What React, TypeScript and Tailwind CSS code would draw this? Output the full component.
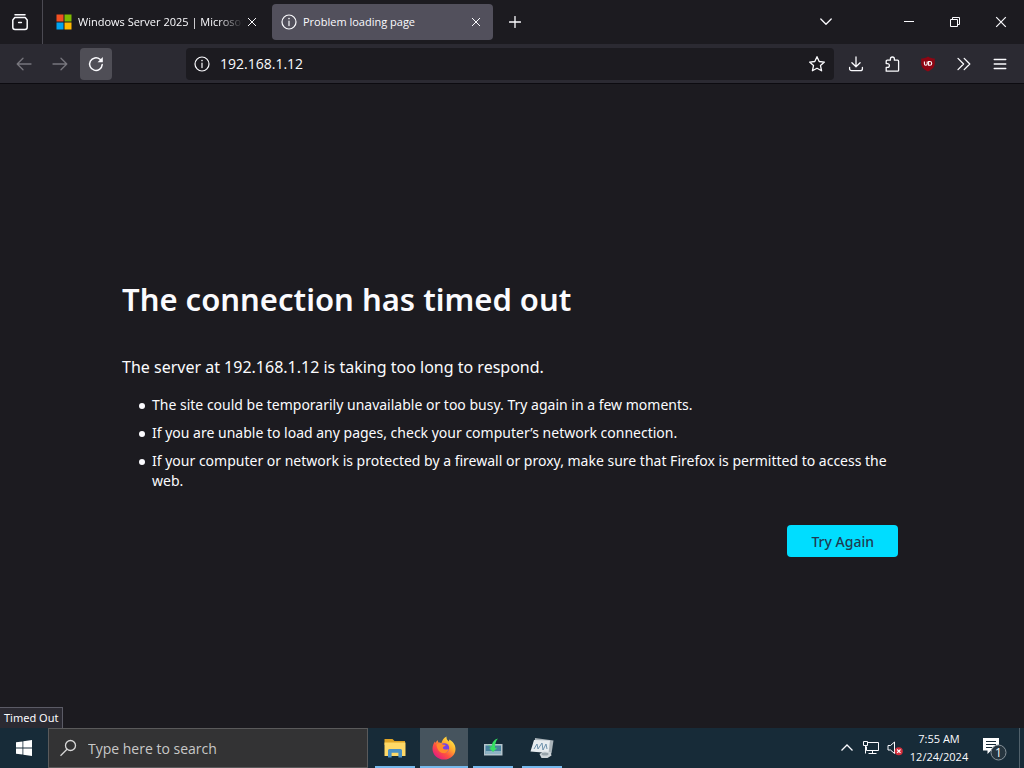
import React, { useState } from 'react';

const InfoIcon = ({ className }: { className?: string }) => (
  <svg viewBox="0 0 16 16" className={className} fill="none" stroke="currentColor" strokeWidth="1.2" aria-hidden="true">
    <circle cx="8" cy="8" r="7" />
    <path d="M8 7v4.6" strokeLinecap="round" />
    <circle cx="8" cy="4.6" r="0.8" fill="currentColor" stroke="none" />
  </svg>
);

const CloseIcon = ({ className }: { className?: string }) => (
  <svg viewBox="0 0 10 10" className={className} fill="none" stroke="currentColor" strokeWidth="1" aria-hidden="true">
    <path d="M1 1l8 8M9 1L1 9" />
  </svg>
);

const MicrosoftLogo = () => (
  <svg viewBox="0 0 16 16" className="size-4 shrink-0" aria-hidden="true">
    <path fill="#f25022" d="M0.5 0.5h7v7h-7z" />
    <path fill="#7fba00" d="M8.5 0.5h7v7h-7z" />
    <path fill="#00a4ef" d="M0.5 8.5h7v7h-7z" />
    <path fill="#ffb900" d="M8.5 8.5h7v7h-7z" />
  </svg>
);

const strokeProps = {
  fill: 'none',
  stroke: 'currentColor',
  strokeWidth: 1.3,
  strokeLinecap: 'round' as const,
  strokeLinejoin: 'round' as const,
  'aria-hidden': true,
};

const TabBar = () => (
  <header className="flex h-11 shrink-0 items-center bg-[#1c1b20]">
    <button aria-label="View recent browsing" className="flex h-11 w-[42px] shrink-0 items-center justify-center pr-[2px]">
      <svg viewBox="0 0 18 18" className="size-[18px]" {...strokeProps} strokeWidth={1.5}>
        <path d="M4 1.8h10" />
        <path d="M3.8 4.6h10.4l2 2.4v7.2a2.2 2.2 0 0 1-2.2 2.2H4a2.2 2.2 0 0 1-2.2-2.2V7z" />
        <path d="M7.6 9.6h2.8" />
      </svg>
    </button>
    <div className="h-11 w-px bg-[#4b4a52]" />

    <nav aria-label="Tabs" className="flex min-w-0 flex-1 items-center gap-1 pl-1">
      <div className="flex h-9 w-[221px] items-center gap-1 rounded pl-[9px] pr-3">
        <MicrosoftLogo />
        <a
          href="#windows-server"
          className="w-[167px] whitespace-nowrap pl-[2px] text-[11px] leading-5 [mask-image:linear-gradient(to_right,black_85%,transparent)]"
        >
          Windows Server 2025 | Microsof
        </a>
        <button aria-label="Close Windows Server tab" className="shrink-0">
          <CloseIcon className="size-[10px]" />
        </button>
      </div>
      <div className="flex h-9 w-[221px] items-center rounded bg-[#52505c] pl-[9px] pr-3">
        <InfoIcon className="size-4 shrink-0" />
        <a href="#problem" className="flex-1 pl-[6px] text-[11px] leading-5">Problem loading page</a>
        <button aria-label="Close Problem loading page tab">
          <CloseIcon className="size-[10px]" />
        </button>
      </div>
      <button aria-label="New tab" className="ml-3">
        <svg viewBox="0 0 12 12" className="size-3" {...strokeProps}>
          <path d="M6 0.5v11M0.5 6h11" />
        </svg>
      </button>
    </nav>

    <button aria-label="List all tabs" className="mr-[42px] flex w-9 justify-center">
      <svg viewBox="0 0 12 8" className="h-2 w-3" {...strokeProps}>
        <path d="M0.8 1l5.2 5.2L11.2 1" />
      </svg>
    </button>
    <button aria-label="Minimize" className="flex h-11 w-[46px] items-center justify-center">
      <svg viewBox="0 0 10 10" className="size-[10px]" stroke="currentColor" aria-hidden="true">
        <path d="M0 4.5h10" />
      </svg>
    </button>
    <button aria-label="Restore" className="flex h-11 w-[46px] items-center justify-center">
      <svg viewBox="0 0 10 10" className="size-[10px]" fill="none" stroke="currentColor" aria-hidden="true">
        <path d="M0.5 2.5h7v7h-7zM2.5 2.5v-2h7v7h-2" />
      </svg>
    </button>
    <button aria-label="Close window" className="flex h-11 w-[46px] items-center justify-center">
      <CloseIcon className="size-3" />
    </button>
  </header>
);

const NavBar = ({ url, onChange }: { url: string; onChange: (value: string) => void }) => (
  <div className="flex h-10 shrink-0 items-center border-b border-[#0c0b10] bg-[#2b2a32] pl-2">
    <button aria-label="Back" className="flex size-8 items-center justify-center text-[#77767d]">
      <svg viewBox="0 0 16 16" className="size-4" {...strokeProps}>
        <path d="M15 8H1.2M7 2.2L1.2 8 7 13.8" />
      </svg>
    </button>
    <button aria-label="Forward" className="ml-1 flex size-8 items-center justify-center text-[#77767d]">
      <svg viewBox="0 0 16 16" className="size-4" {...strokeProps}>
        <path d="M1 8h13.8M9 2.2L14.8 8 9 13.8" />
      </svg>
    </button>
    <button aria-label="Reload" className="ml-1 flex size-8 items-center justify-center rounded bg-[#4f4e56]">
      <svg viewBox="0 0 16 16" className="size-4" {...strokeProps} strokeWidth={1.5}>
        <path d="M14.2 8.6A6.3 6.3 0 1 1 12 3.3l1.6 1.5" />
        <path d="M14.8 1v5.2H9.600z" fill="currentColor" stroke="none" />
      </svg>
    </button>

    <div className="ml-[74px] flex h-8 min-w-0 flex-1 items-center rounded bg-[#1c1b20] px-2">
      <InfoIcon className="size-4 shrink-0" />
      <input
        aria-label="Address"
        value={url}
        onChange={(e) => onChange(e.target.value)}
        className="ml-2 min-w-0 flex-1 bg-transparent pl-[2px] text-[14px] outline-none"
      />
      <button aria-label="Bookmark this page">
        <svg viewBox="0 0 18 18" className="size-[18px]" {...strokeProps}>
          <path d="M9 1.7l2.2 4.8 5.2.6-3.900 3.500 1.100 5.200L9 13.200l-4.600 2.600 1.100-5.200L1.600 7.100l5.200-.6z" />
        </svg>
      </button>
    </div>

    <div className="ml-[14px] mr-4 flex items-center gap-5">
      <button aria-label="Downloads">
        <svg viewBox="0 0 16 16" className="size-4" {...strokeProps}>
          <path d="M8 1v9.600M3.900 6.800L8 10.800l4.100-4M1.600 11.400v1.300a2 2 0 0 0 2 2h8.800a2 2 0 0 0 2-2v-1.300" />
        </svg>
      </button>
      <button aria-label="Extensions">
        <svg viewBox="0 0 16 16" className="size-4" {...strokeProps}>
          <path d="M2.200 15.200V11.400h1.300a1.900 1.900 0 0 0 0-3.800H2.200V5.200a1 1 0 0 1 1-1h3.200V3a2 2 0 0 1 4 0v1.200h3.200a1 1 0 0 1 1 1v9a1 1 0 0 1-1 1z" />
        </svg>
      </button>
      <button aria-label="uBlock Origin">
        <svg viewBox="0 0 16 16" className="size-4" aria-hidden="true">
          <path fill="#8e0613" d="M8 0.500C5.800 2 3.400 2.400 1.200 2.600v4.900c0 3.700 2.800 6 6.800 8 4-2 6.800-4.300 6.800-8V2.600C12.600 2.400 10.200 2 8 0.500z" />
          <path d="M4.400 5.500v2.300a1.400 1.400 0 0 0 2.800 0V5.500M8.600 5.500v3.800h1.200a1.900 1.900 0 0 0 0-3.800z" fill="none" stroke="#fff" strokeWidth="1.100" />
        </svg>
      </button>
      <button aria-label="More tools">
        <svg viewBox="0 0 16 16" className="size-4" {...strokeProps}>
          <path d="M2 2.400L7.600 8 2 13.600M8.200 2.400L13.800 8l-5.600 5.600" />
        </svg>
      </button>
      <button aria-label="Open application menu">
        <svg viewBox="0 0 16 16" className="size-4" {...strokeProps}>
          <path d="M2.200 3.500h11.600M2.200 8h11.600M2.200 12.500h11.600" />
        </svg>
      </button>
    </div>
  </div>
);

const reasons = [
  'The site could be temporarily unavailable or too busy. Try again in a few moments.',
  'If you are unable to load any pages, check your computer’s network connection.',
  'If your computer or network is protected by a firewall or proxy, make sure that Firefox is permitted to access the web.',
];

const ErrorPage = () => (
  <main className="relative flex min-h-0 flex-1 flex-col justify-center bg-[#1c1b20] pl-[122px] pr-[126px] pt-6 font-['Noto_Sans','Open_Sans',sans-serif] text-[#fbfbfe]">
    <h1 className="text-[31px] font-semibold leading-10">The connection has timed out</h1>
    <p className="mt-9 text-[16px] leading-6">The server at 192.168.1.12 is taking too long to respond.</p>
    <ul className="mt-4 space-y-2 pl-[17px] text-[14px] leading-5">
      {reasons.map((reason) => (
        <li
          key={reason}
          className="flex before:mr-[7px] before:mt-2 before:size-[6px] before:shrink-0 before:rounded-full before:bg-current"
        >
          {reason}
        </li>
      ))}
    </ul>
    <div className="mt-[34px] flex justify-end">
      <button className="h-8 rounded bg-[#00ddff] px-6 text-[14px] font-medium text-[#1f3a52]">Try Again</button>
    </div>
    <div className="absolute bottom-0 left-0 border-r border-t border-[#5b5b66] bg-[#2b2a32] px-1 text-[11px] leading-5">
      Timed Out
    </div>
  </main>
);

const ExplorerIcon = () => (
  <svg viewBox="0 0 24 24" className="size-6" aria-hidden="true">
    <path fill="#e0a526" d="M1.500 3h8l2 2h10.500v4H1.500z" />
    <path fill="#ffd967" d="M1.500 6.500h21V20h-21z" />
    <path fill="#4a8fc4" d="M5 21.500V14.500a1.500 1.500 0 0 1 1.500-1.500h11a1.500 1.500 0 0 1 1.500 1.500v7h-3.600v-4.700H8.600v4.700z" />
  </svg>
);

const FirefoxIcon = () => (
  <svg viewBox="0 0 24 24" className="size-6" aria-hidden="true">
    <defs>
      <linearGradient id="fx-body" x1="0.9" y1="0.05" x2="0.15" y2="0.95">
        <stop offset="0" stopColor="#fff44f" />
        <stop offset="0.35" stopColor="#ffb02e" />
        <stop offset="0.65" stopColor="#ff5140" />
        <stop offset="1" stopColor="#e21587" />
      </linearGradient>
    </defs>
    <path
      fill="url(#fx-body)"
      d="M14.500 0.400c-.4 2.400 1 3.600 2.300 5 .5-.5.4-1.200.3-1.800 4 2 6.400 5.400 6.400 9.400C23.500 19 18.400 23.600 12.100 23.600S0.500 18.800.5 12.700c0-3 1-5.400 2.400-7.300l.5 1.700c.5-1.200 1.400-2.300 2.500-2.900-.1 1 .1 1.700.6 2.400 1 0 2 .1 2.800.6C10.300 4.400 11.500 1.800 14.500.4z"
    />
    <circle cx="12.400" cy="12" r="4.800" fill="#7542e5" />
    <path fill="#ff8a2b" d="M4.500 8.400c2-1.200 4.600-1 6.300.2l2.900.5c-.2 1.400-2.300 1.400-2.700 2.200-.3.800.3 2.200 2.400 2.300 1.600 0 2.300-.8 3.300-.2-.8 2.700-3.200 4.200-6 3.700-3.700-.7-5.900-4.600-6.200-8.700z" />
  </svg>
);

const RemoteIcon = () => (
  <svg viewBox="0 0 22 22" className="size-[22px]" aria-hidden="true">
    <path fill="#b4c4cc" d="M2 7h18.500v11.500H2z" />
    <path fill="#47819c" d="M3.500 8.500h15.500v8.500H3.500z" />
    <path fill="#8fb3c4" d="M3.500 14h15.500v3H3.500z" />
    <path fill="#36df62" d="M5 7.500c2 .5 3.500 1.500 4.500 2.500C10 5.500 12 2.500 16 1.500c-2.500 2.500-3 6-3 9.500l2.500-.5-4.500 4.500-4-4 2 .3C8 9.500 7 8.500 5 7.500z" />
  </svg>
);

const MonitorIcon = () => (
  <svg viewBox="0 0 24 24" className="size-6" aria-hidden="true">
    <path fill="#aab4ba" d="M5 2l18.500 2.500-2 13L4 15z" />
    <path fill="#e7ecef" d="M4 4l16 .5L18.500 17 0.500 15.500z" />
    <path fill="none" stroke="#6d91ab" d="M4 13l3-5 1 5 4-6 1 7 3-6 1 5" />
    <path fill="#cfd6da" d="M9.500 18l4-2.500 7 .5 1 3.500-4 2.500h-6z" />
    <ellipse cx="15" cy="18" rx="3.500" ry="1.500" fill="#98a4ab" />
  </svg>
);

const apps = [
  { name: 'File Explorer', icon: ExplorerIcon, active: false },
  { name: 'Firefox', icon: FirefoxIcon, active: true },
  { name: 'Remote Setup', icon: RemoteIcon, active: false },
  { name: 'System Monitor', icon: MonitorIcon, active: false },
];

const Taskbar = () => {
  const [query, setQuery] = useState('');

  return (
    <footer className="flex h-10 shrink-0 bg-[#172b38]">
      <button aria-label="Start" className="flex w-12 shrink-0 items-center justify-center">
        <svg viewBox="0 0 16 16" className="size-4" fill="#fff" aria-hidden="true">
          <path d="M0 2.300l6.500-.9v6.200H0zM7.300 1.300L16 0v7.600H7.300zM0 8.400h6.500v6.200L0 13.700zM7.300 8.400H16V16l-8.700-1.300z" />
        </svg>
      </button>
      <label className="flex w-80 items-center border border-[#5a5a5b] bg-[#333334] pl-[10px]">
        <svg viewBox="0 0 18 18" className="size-[18px] shrink-0" fill="none" stroke="#d8d8d8" strokeWidth="1.300" aria-hidden="true">
          <circle cx="11.500" cy="6.500" r="5" />
          <path d="M8 10.200L1.500 16.800" />
        </svg>
        <input
          aria-label="Search"
          value={query}
          onChange={(e) => setQuery(e.target.value)}
          placeholder="Type here to search"
          className="min-w-0 flex-1 bg-transparent pl-[11px] text-[14px] outline-none placeholder:text-[#c8c8c8]"
        />
      </label>

      <div className="ml-[3px] flex gap-[1px]">
        {apps.map((app) => (
          <button
            key={app.name}
            aria-label={app.name}
            className={app.active ? 'flex w-12 flex-col items-center bg-[#46545e]' : 'flex w-12 flex-col items-center'}
          >
            <span className="flex flex-1 items-center pt-[2px]">
              <app.icon />
            </span>
            <span className={app.active ? 'h-[2px] w-full bg-[#76b9ed]' : 'h-[2px] w-10 bg-[#76b9ed]'} />
          </button>
        ))}
      </div>

      <div className="ml-auto flex items-center">
        <button aria-label="Show hidden icons" className="mr-2">
          <svg viewBox="0 0 14 14" className="size-[14px]" fill="none" stroke="currentColor" strokeWidth="1.300" aria-hidden="true">
            <path d="M1.500 9.500L7 4l5.500 5.500" />
          </svg>
        </button>
        <button aria-label="Network" className="mr-2">
          <svg viewBox="0 0 17 16" className="h-4 w-[17px]" fill="none" stroke="currentColor" aria-hidden="true">
            <path d="M5.500 2.500h11v8h-12v-4M10.500 10.500v3M6.500 13.500h8M1.500 1.500h4v4h-4zM3.500 5.500v8" />
          </svg>
        </button>
        <button aria-label="Volume muted" className="mr-[6px]">
          <svg viewBox="0 0 16 16" className="size-4" fill="none" aria-hidden="true">
            <path d="M1 5.500h2.500L7.500 2v11.500L3.500 10H1z" stroke="currentColor" />
            <circle cx="11.800" cy="11.200" r="4" fill="#d32f3c" />
            <path d="M10.100 9.500l3.400 3.400M13.500 9.500l-3.400 3.400" stroke="#fff" strokeWidth="1.100" />
          </svg>
        </button>
        <div className="w-[60px] whitespace-nowrap text-center text-[11px] leading-[18px]">
          <div>7:55 AM</div>
          <div>12/24/2024</div>
        </div>
        <button aria-label="1 new notification" className="ml-[13px]">
          <svg viewBox="0 0 26 26" className="size-[26px]" aria-hidden="true">
            <path fill="#fff" d="M1 3h16v12.500H9l-3.500 3.500v-3.500H1z" />
            <path stroke="#172b38" strokeWidth="1.200" d="M4 6.500h10M4 9.500h10M4 12.500h6" />
            <circle cx="16.500" cy="17.500" r="7.500" fill="#26353f" stroke="#87929a" />
            <text x="16.500" y="21.500" textAnchor="middle" fontSize="12" fill="#fff">1</text>
          </svg>
        </button>
        <div className="ml-[11px] mr-1 h-10 w-px bg-[#51616b]" />
      </div>
    </footer>
  );
};

const App = () => {
  const [url, setUrl] = useState('192.168.1.12');

  return (
    <div className="flex h-screen flex-col bg-[#1c1b20] font-['Open_Sans','Noto_Sans',sans-serif] text-[#fbfbfe]">
      <TabBar />
      <NavBar url={url} onChange={setUrl} />
      <ErrorPage />
      <Taskbar />
    </div>
  );
};

export default App;
